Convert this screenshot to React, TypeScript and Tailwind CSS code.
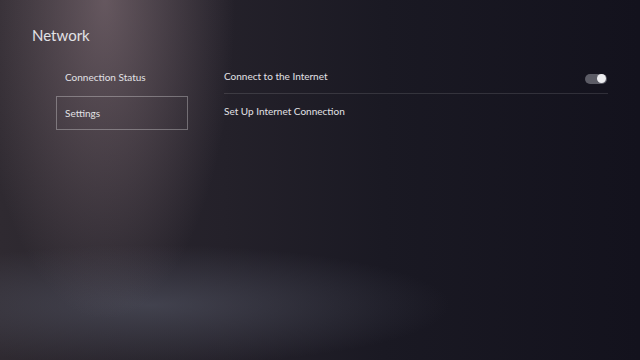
import React from "react";

export default function App() {
  return (
    <div
      className="w-[640px] h-[360px] overflow-hidden text-[#e2e2e6] bg-[radial-gradient(ellipse_130px_320px_at_105px_0px,rgba(150,128,135,0.55),transparent),radial-gradient(ellipse_300px_60px_at_150px_305px,rgba(92,96,112,0.5),transparent),linear-gradient(90deg,#2f2a31,#24212a_35%,#1a1923_60%,#13121d)]"
      style={{ fontFamily: 'Lato, "Noto Sans", sans-serif' }}
    >
      <div className="pl-[32px] pt-[24px] h-[60px]">
        <h1 className="text-[15px] leading-[22px] font-normal">Network</h1>
      </div>
      <div className="flex pl-[56px]">
        <div className="flex flex-col gap-[2px] w-[132px]">
          <div className="h-[34px] px-[9px] flex items-center text-[10px]">
            Connection Status
          </div>
          <div className="h-[34px] px-[8px] flex items-center text-[10px] border border-[rgba(255,255,255,0.3)]">
            Settings
          </div>
        </div>
        <div className="ml-[36px] w-[384px] flex flex-col">
          <div className="h-[34px] flex items-center justify-between border-b border-[rgba(255,255,255,0.12)] text-[10px]">
            <span>Connect to the Internet</span>
            <div className="relative w-[22px] h-[10px] rounded-full bg-[#5c5c66] mr-[1px] mt-[4px]">
              <div className="absolute right-[1px] top-[0.5px] w-[9px] h-[9px] rounded-full bg-[#ededf0]" />
            </div>
          </div>
          <div className="h-[34px] flex items-center text-[10px]">
            Set Up Internet Connection
          </div>
        </div>
      </div>
    </div>
  );
}
